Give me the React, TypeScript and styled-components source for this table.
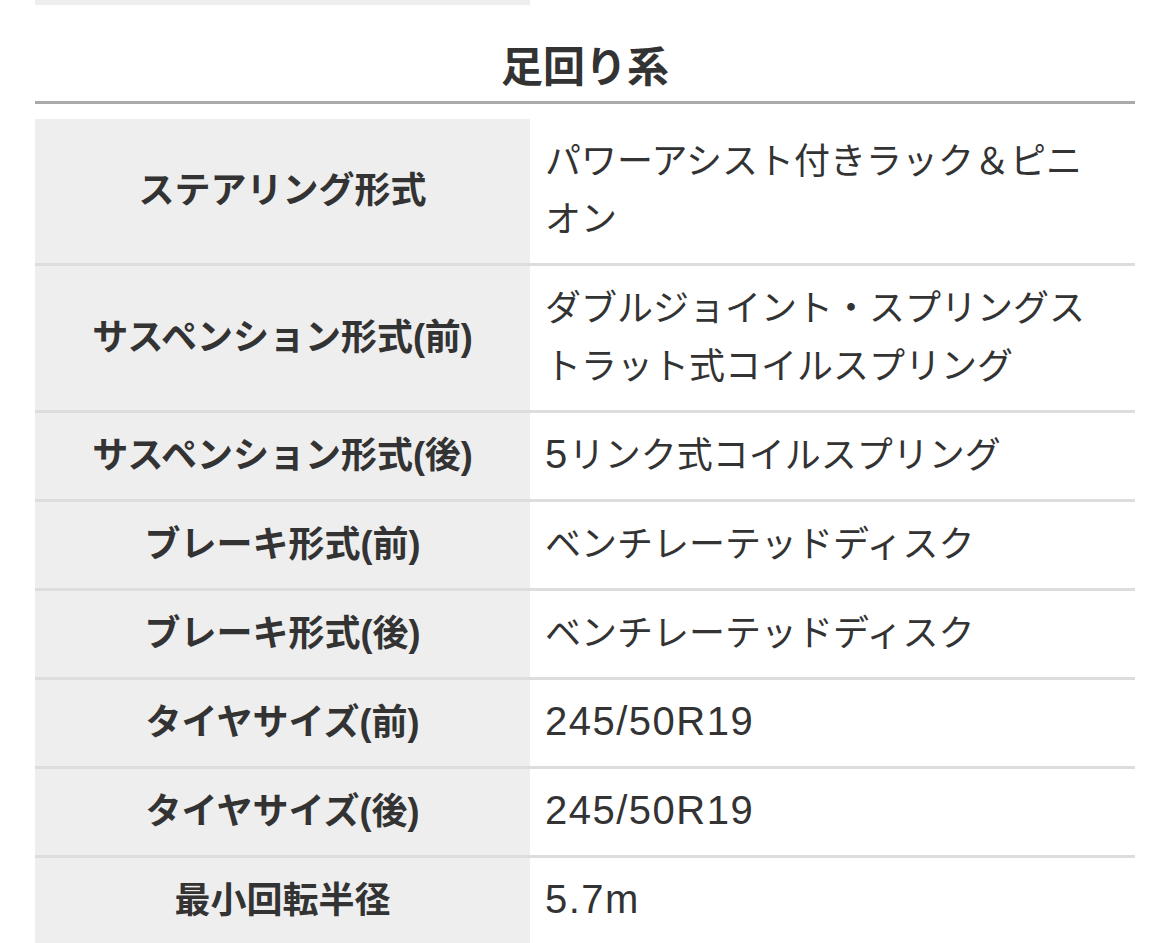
import React from 'react';
import styled, { createGlobalStyle } from 'styled-components';

const GlobalStyle = createGlobalStyle`
    html, body {
        margin: 0;
        padding: 0;
        background: #fff;
    }
    body {
        font-family: "Liberation Sans", "Noto Sans CJK JP", sans-serif;
        color: #333;
    }
    *, *::before, *::after {
        box-sizing: border-box;
    }
`;

const Page = styled.div`
    padding: 0 35px;
    height: 943px;
    overflow: hidden;
`;

/* tail of the previous spec table, cut off by the top edge */
const PrevTableTail = styled.div`
    display: grid;
    grid-template-columns: 495px 1fr;
    height: 5px;

    &::before {
        content: '';
        background: #eee;
    }
`;

const SectionTitle = styled.h2`
    margin: 38px 0 0;
    padding: 0 0 8px;
    font-size: 42px;
    line-height: 50px;
    font-weight: 700;
    text-align: center;
    color: #333;
    border-bottom: 3px solid #aaa;
`;

const SpecTable = styled.table`
    width: 100%;
    margin-top: 15px;
    table-layout: fixed;
    border-collapse: collapse;
    border-spacing: 0;
`;

const LabelCol = styled.col`
    width: 495px;
`;

const SpecRow = styled.tr`
    border-bottom: 3px solid #ddd;
`;

const SpecLabel = styled.th`
    padding: 14px 15px;
    background: #eee;
    font-size: 36px;
    line-height: 58px;
    font-weight: 700;
    text-align: center;
    vertical-align: middle;
`;

const SpecValue = styled.td`
    padding: 14px 30px 14px 15px;
    font-size: 36px;
    line-height: 58px;
    font-weight: 400;
    text-align: left;
    vertical-align: middle;
`;

// the latin glyphs of the original gothic face run larger than Arial's
const Latin = styled.span`
    font-size: 40px;
    line-height: 1;
    letter-spacing: 1.5px;
`;

const withLatin = (text: string) =>
    text.split(/([\x21-\x7e]+)/).map((part, i) =>
        i % 2 === 1 ? <Latin key={i}>{part}</Latin> : part
    );

const specs: [string, string][] = [
    ['ステアリング形式', 'パワーアシスト付きラック＆ピニオン'],
    ['サスペンション形式(前)', 'ダブルジョイント・スプリングストラット式コイルスプリング'],
    ['サスペンション形式(後)', '5リンク式コイルスプリング'],
    ['ブレーキ形式(前)', 'ベンチレーテッドディスク'],
    ['ブレーキ形式(後)', 'ベンチレーテッドディスク'],
    ['タイヤサイズ(前)', '245/50R19'],
    ['タイヤサイズ(後)', '245/50R19'],
    ['最小回転半径', '5.7m'],
];

const App = () => (
    <>
        <GlobalStyle />
        <Page>
            <PrevTableTail />
            <SectionTitle>足回り系</SectionTitle>
            <SpecTable>
                <colgroup>
                    <LabelCol />
                    <col />
                </colgroup>
                <tbody>
                    {specs.map(([label, value]) => (
                        <SpecRow key={label}>
                            <SpecLabel>{label}</SpecLabel>
                            <SpecValue>{withLatin(value)}</SpecValue>
                        </SpecRow>
                    ))}
                </tbody>
            </SpecTable>
        </Page>
    </>
);

export default App;
